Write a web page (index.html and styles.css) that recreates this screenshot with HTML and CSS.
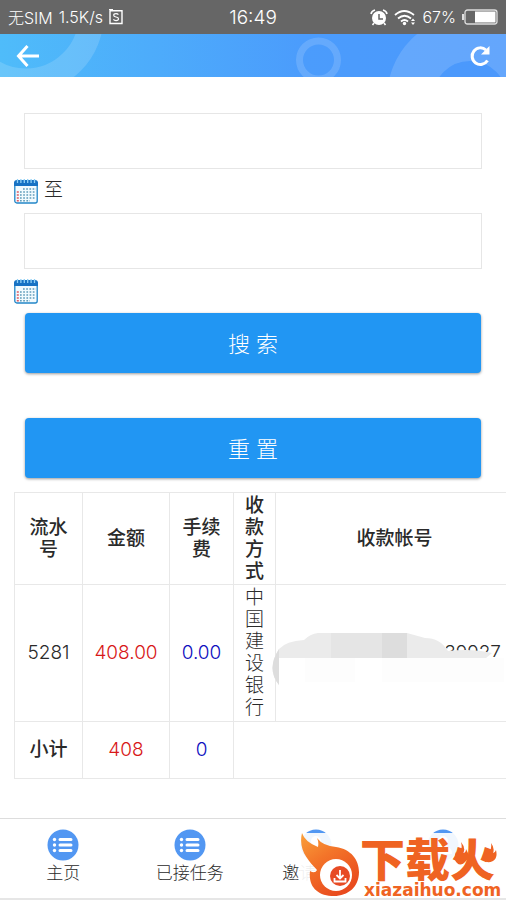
FILE: index.html
```html
<!DOCTYPE html>
<html lang="zh-CN">
<head>
<meta charset="utf-8">
<meta name="viewport" content="width=device-width, initial-scale=1">
<title>收款记录</title>
<link rel="stylesheet" href="styles.css">
</head>
<body>
<svg class="defs" aria-hidden="true">
  <symbol id="calendar" viewBox="0 0 24 26">
    <rect x="0.8" y="4" width="22.4" height="21" rx="2" fill="#f2fbff" stroke="#2386c8" stroke-width="1.3"/>
    <path d="M0 8V5q0-3 3-3h18q3 0 3 3v3z" fill="#1772c4"/>
    <path d="M3.5 1v4M6.900 1v4M10.300 1v4M13.700 1v4M17.100 1v4M20.500 1v4" stroke="#8ed0f6" stroke-width="1.300"/>
    <path d="M9 11h13M6 14h16M6 17h16M6 20h16M6 22.700h10" stroke="#5f9cba" stroke-width="1.500" stroke-dasharray="1.700 1.500"/>
    <path d="M2.800 14h2M2.800 17h2M2.800 20h2M2.800 22.700h2" stroke="#e05a62" stroke-width="1.600"/>
  </symbol>
  <symbol id="list" viewBox="0 0 32 32">
    <circle cx="16" cy="16" r="15.500" fill="#5297f2"/>
    <path d="M13 10.500h11M13 16h11M13 21.500h11" stroke="#fff" stroke-width="3" stroke-linecap="round"/>
    <g fill="#fff"><circle cx="7.500" cy="10.500" r="1.700"/><circle cx="7.500" cy="16" r="1.700"/><circle cx="7.500" cy="21.500" r="1.700"/></g>
  </symbol>
  <symbol id="person" viewBox="0 0 32 32">
    <circle cx="16" cy="16" r="15.500" fill="#5297f2"/>
    <circle cx="16" cy="12" r="5" fill="#fff"/><path d="M7 25q0-8 9-8t9 8z" fill="#fff"/>
  </symbol>
</svg>

<div class="status">
  <div class="status-left">
    <span>无SIM</span><span>1.5K/s</span>
    <svg width="14" height="16" viewBox="0 0 14 16" fill="none" stroke="#fff"><path d="M1 1.800h12v12.700H1V1.800M0 .8h4" stroke-width="1.400"/><path d="M9.400 5.700Q8.700 4.700 7 4.700q-2.300 0-2.300 1.600 0 1.300 2.300 1.700 2.500.4 2.500 1.800 0 1.800-2.500 1.800-1.800 0-2.600-1.200" stroke-width="1.200"/></svg>
  </div>
  <div class="clock">16:49</div>
  <div class="status-right">
    <svg width="18" height="17" viewBox="0 0 18 17"><circle cx="9" cy="9" r="7" fill="#fff"/><path d="M1 5Q1.500 2 5 1M17 5Q16.500 2 13 1M4 14l-1.500 2M14 14l1.500 2" fill="none" stroke="#fff" stroke-width="1.600"/><path d="M9 5v5h4" fill="none" stroke="#666" stroke-width="1.500"/></svg>
    <svg width="22" height="17" viewBox="0 0 22 17"><path d="M1 6q9-8 19 0M4 9.500q6.500-5.500 13 0M7 12.500q3.500-3 7 0" fill="none" stroke="#fff" stroke-width="1.800"/><circle cx="10.500" cy="14.500" r="1.700" fill="#fff"/><path d="M17 12l2-2.500 2 2.500zM17 13.500h4L19 16z" fill="#fff"/></svg>
    <span>67%</span>
    <svg width="36" height="16" viewBox="0 0 36 16"><path d="M1 5v6" stroke="#fff" stroke-width="1.600"/><rect x="3" y="1" width="32" height="14" rx="2.500" fill="none" stroke="#ddd" stroke-width="1.300"/><path d="M13 2.500h20.500v11H13z" fill="#fff"/></svg>
  </div>
</div>

<header class="header">
  <svg class="header-art" viewBox="0 0 506 43" preserveAspectRatio="xMidYMid slice" aria-hidden="true">
    <circle cx="26" cy="-18" r="65" fill="none" stroke="#fff" stroke-opacity=".15" stroke-width="25"/>
    <circle cx="318.500" cy="26" r="19" fill="none" stroke="#fff" stroke-opacity=".15" stroke-width="7"/>
    <circle cx="470" cy="64" r="60" fill="none" stroke="#fff" stroke-opacity=".14" stroke-width="46"/>
  </svg>
  <a class="icon-link" href="#back" aria-label="返回"><svg width="24" height="24" viewBox="0 0 24 24" fill="none" stroke="#fff" stroke-width="3"><path d="M24 12H4M12.500 2L3.500 12l9 10"/></svg></a>
  <button class="icon-link" type="button" aria-label="刷新"><svg width="22" height="22" viewBox="0 0 22 22"><path d="M18.500 15.500A8.300 8.300 0 1 1 17 5" fill="none" stroke="#fff" stroke-width="3"/><path d="M20.500 1v8.500H12z" fill="#fff"/></svg></button>
</header>

<main>
  <form class="search">
    <input class="date" type="text" aria-label="开始日期">
    <div class="picker"><button type="button" aria-label="选择开始日期"><svg width="24" height="26"><use href="#calendar"/></svg></button><span>至</span></div>
    <input class="date" type="text" aria-label="结束日期">
    <div class="picker"><button type="button" aria-label="选择结束日期"><svg width="24" height="26"><use href="#calendar"/></svg></button></div>
    <button class="action" type="button">搜 索</button>
    <button class="action" type="reset">重 置</button>
  </form>

  <div class="records">
    <table>
      <colgroup><col class="c-id"><col class="c-amount"><col class="c-fee"><col class="c-way"><col class="c-account"></colgroup>
      <thead><tr><th>流水号</th><th>金额</th><th>手续费</th><th>收款方式</th><th>收款帐号</th></tr></thead>
      <tbody>
        <tr class="entry"><td>5281</td><td class="red">408.00</td><td class="blue">0.00</td><td>中国建设银行</td>
          <td class="account">39927
            <svg class="mask" width="236" height="78" viewBox="0 0 236 78" aria-hidden="true">
              <path d="M8 27Q16 8 34 7L43 1Q90-1 137 1L155 6Q172 5 178 18L214 18L220 24H236V78H8z" fill="#fff"/>
              <path d="M9 52Q-4 36 9 16Q16 8 34 7Q40 1 48 0H137L155 5Q170 5 178 18Q202 15 222 20L216 25H9z" fill="#ebebeb"/>
              <path d="M61 0h25v25H61zM86 0h26v25H86z" fill="#e5e5e5"/><path d="M112 0h25v25h-25z" fill="#ddd"/>
              <path d="M9 52Q-4 36 9 16z" fill="#ddd"/>
              <path d="M35 25h50v24H35zM112 25h122v24H112z" fill="#fdfdfd"/>
            </svg>
          </td></tr>
        <tr class="total"><th>小计</th><td class="red">408</td><td class="blue">0</td><td colspan="2"></td></tr>
      </tbody>
    </table>
  </div>
</main>

<footer>
  <nav class="tabs">
    <a href="#home"><svg width="32" height="32"><use href="#list"/></svg>主页</a>
    <a href="#tasks"><svg width="32" height="32"><use href="#list"/></svg>已接任务</a>
    <a href="#invite"><svg width="32" height="32"><use href="#person"/></svg>邀请好友</a>
    <a href="#center" aria-label="应用中心"><svg width="32" height="32"><use href="#person"/></svg></a>
  </nav>
  <div class="brand">
    <svg class="flame" width="60" height="64" viewBox="0 0 60 64" aria-hidden="true">
      <defs><linearGradient id="fire" x1="0" y1="0" x2=".6" y2="1"><stop offset="0" stop-color="#f9a03b"/><stop offset=".45" stop-color="#f37429"/><stop offset="1" stop-color="#e94b1e"/></linearGradient></defs>
      <path d="M2 0Q5 9 18 14Q19 9 17 5Q23 13 36 14C51 16 59 27 59 39C59 54 48 63 34 63C18 63 8 54 10 38Q15 41 17 37C8 27-2 17 2 0z" fill="url(#fire)"/>
      <circle cx="36" cy="42" r="16" fill="#fff"/><circle cx="40" cy="43" r="10" fill="#e74b25"/>
      <path d="M40 37v8M36.500 42l3.500 3.500 3.500-3.500M34.500 45v3.500h11V45" fill="none" stroke="#fff" stroke-width="1.800"/>
    </svg>
    <div class="brand-text"><strong>下载火</strong><span>xiazaihuo.com</span>
      <svg class="sparks" width="42" height="24" viewBox="0 0 42 24" fill="#ef6322" aria-hidden="true"><path d="M6 0q5 6 2 11 3 0 3-4 5 8 0 12-5 6-9 2-4-4-1-11 2 4 3 2 4-4 2-12zM36 1q4 5 2 10 2 0 3-3 2 8-3 11-6 3-9-1-1-4 1-8 2 4 4 1 3-4 2-10z"/></svg>
    </div>
  </div>
</footer>
</body>
</html>
```
FILE: styles.css
```css
* { box-sizing: border-box; }
body {
  margin: 0;
  min-height: 100vh;
  display: flex;
  flex-direction: column;
  overflow-x: hidden;
  background: #fff;
  color: #2a2a2a;
  font-family: Inter, "Noto Sans CJK SC", sans-serif;
  font-weight: 300;
}
button, input { font: inherit; }
svg { display: block; flex: none; }
.defs { position: absolute; width: 0; height: 0; }

.status {
  display: grid;
  grid-template-columns: 1fr auto 1fr;
  align-items: center;
  height: 34px;
  padding: 0 8px;
  background: #666;
  color: #fff;
  font-size: 16px;
}
.status-left, .status-right { display: flex; align-items: center; gap: 6px; }
.status-right { justify-content: flex-end; }
.clock { font-size: 19px; }

.header {
  position: relative;
  display: flex;
  align-items: center;
  justify-content: space-between;
  height: 43px;
  padding: 0 15px;
  background: linear-gradient(90deg, #4fbcfa, #4b9cfc 60%, #4b98fc);
}
.header-art { position: absolute; inset: 0; width: 100%; height: 100%; }
.icon-link { position: relative; padding: 0; border: 0; background: none; }

main { flex: 1; padding-top: 36px; }
.search { display: flex; flex-direction: column; }
.date {
  height: 56px;
  margin: 0 24px;
  padding: 0 12px;
  border: 1px solid #e6e6e6;
  background: #fff;
  font-size: 19px;
}
.picker {
  display: flex;
  align-items: flex-start;
  gap: 6px;
  height: 44px;
  padding: 9px 0 0 14px;
  font-size: 19px;
  line-height: 24px;
}
.picker button { padding: 0; border: 0; background: none; }
.action {
  height: 60px;
  margin: 0 25px 45px;
  padding: 0 0 2px;
  border: 0;
  border-radius: 4px;
  background: #2196f3;
  box-shadow: 0 1px 3px rgba(0, 0, 0, .4);
  color: #fff;
  font-size: 22px;
}
.action:last-child { margin-bottom: 14px; }

.records { padding-left: 14px; overflow: hidden; }
table {
  width: 500px;
  table-layout: fixed;
  border-collapse: collapse;
  font-size: 19px;
  line-height: 22px;
  text-align: center;
}
th, td { height: 92px; padding: 0 10px; border: 1px solid #e8e8e8; }
th { font-weight: 500; }
.c-id { width: 68px; }
.c-amount { width: 87px; }
.c-fee { width: 64px; }
.c-way { width: 42px; }
.entry td { height: 137px; padding: 0; }
.entry td:nth-child(4) { padding: 0 10px; }
.total th, .total td { height: 57px; }
.red { color: #d81818; }
.blue { color: #1010c0; }
.entry .account { position: relative; padding-right: 12px; text-align: right; }
.mask { position: absolute; left: -6px; top: 48px; }

footer { position: relative; border-top: 1px solid #ddd; }
.tabs {
  display: grid;
  grid-template-columns: repeat(4, 1fr);
  height: 81px;
  padding-top: 10px;
  border-bottom: 2px solid #e6e6e6;
}
.tabs a {
  display: flex;
  flex-direction: column;
  align-items: center;
  color: #2a2a2a;
  font-size: 17px;
  line-height: 24px;
  text-decoration: none;
}
.brand {
  position: absolute;
  right: 0;
  bottom: 2px;
  display: flex;
  width: 206px;
  height: 65px;
  background: rgba(255, 255, 255, .92);
}
.brand-text { position: relative; color: #ef6322; }
.brand strong { display: block; height: 48px; font-size: 45px; font-weight: 900; line-height: 56px; }
.brand span { display: block; padding-left: 4px; font: bold 17px/18px "DejaVu Sans", sans-serif; }
.sparks { position: absolute; left: 95px; top: 9px; }
```
